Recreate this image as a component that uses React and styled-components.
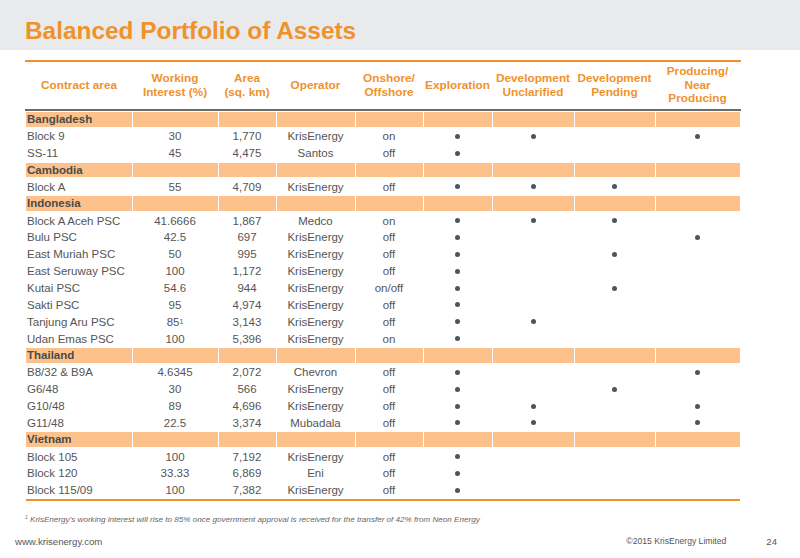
import styled, { createGlobalStyle } from 'styled-components';

const GlobalStyle = createGlobalStyle`
  body {
    margin: 0;
    background: #fff;
    font-family: "Liberation Sans", Arial, sans-serif;
  }
`;

const COLS = '106px 86px 58px 79px 68px 69px 82px 81px 85px';

const Slide = styled.div`
  width: 800px;
  height: 558px;
  overflow: hidden;
  position: relative;
`;

const TitleBar = styled.div`
  height: 50px;
  box-sizing: border-box;
  padding: 17px 0 0 25px;
  background: #e9eaec;
  color: #f0922b;
  font-size: 24.4px;
  font-weight: bold;
  line-height: normal;
`;

const Table = styled.div`
  width: 714px;
  margin: 10px 0 0 26px;
  border-bottom: 2px solid #f0922b;
`;

const HeaderRow = styled.div`
  display: grid;
  grid-template-columns: ${COLS};
  height: 47px;
  border-top: 2px solid #f0922b;
  border-bottom: 2px solid #6a6a6a;
  margin: 0 -1px;
  padding: 0 1px;
`;

const HeadCell = styled.div`
  display: flex;
  align-items: center;
  justify-content: center;
  text-align: center;
  color: #f0922b;
  font-size: 11.8px;
  font-weight: bold;
  line-height: 13.5px;
  white-space: nowrap;
`;

const Row = styled.div`
  display: grid;
  grid-template-columns: ${COLS};
  height: 16.87px;
`;

const BandCell = styled.div`
  background: #fdc28b;
  border-top: 1px solid #fff;
  border-bottom: 1px solid #fff;
  border-left: ${(p) => (p.$first ? '0' : '1.5px solid #fff')};
  color: #4a4a4a;
  font-size: 11.5px;
  font-weight: bold;
  line-height: 14.8px;
  padding-left: 1px;
`;

const Cell = styled.div`
  display: flex;
  align-items: center;
  justify-content: ${(p) => (p.$left ? 'flex-start' : 'center')};
  padding-left: ${(p) => (p.$left ? '1px' : '0')};
  color: #555;
  font-size: 11.5px;
  white-space: nowrap;
`;

const Sup = styled.sup`
  font-size: ${(p) => (p.$small ? '5px' : '7px')};
  line-height: 0;
  vertical-align: ${(p) => (p.$small ? '3px' : '4px')};
`;

const Dot = styled.span`
  display: block;
  width: 5px;
  height: 5px;
  border-radius: 50%;
  background: #4b5561;
`;

const Footnote = styled.div`
  margin: 14px 0 0 25px;
  color: #666;
  font-size: 8.1px;
  font-style: italic;
  line-height: 9px;
`;

const Footer = styled.div`
  display: flex;
  align-items: center;
  margin-top: 12px;
  padding: 0 23px 0 15px;
  color: #555;
  font-size: 9.6px;
  line-height: 11px;
`;

const Copyright = styled.span`
  margin-left: auto;
  margin-right: 40px;
  font-size: 8.6px;
`;

const headers = [
  'Contract area',
  'Working\nInterest (%)',
  'Area\n(sq. km)',
  'Operator',
  'Onshore/\nOffshore',
  'Exploration',
  'Development\nUnclarified',
  'Development\nPending',
  'Producing/\nNear\nProducing',
];

const data = [
  {
    country: 'Bangladesh',
    rows: [
      ['Block 9', '30', '1,770', 'KrisEnergy', 'on', 1, 1, 0, 1],
      ['SS-11', '45', '4,475', 'Santos', 'off', 1, 0, 0, 0],
    ],
  },
  {
    country: 'Cambodia',
    rows: [['Block A', '55', '4,709', 'KrisEnergy', 'off', 1, 1, 1, 0]],
  },
  {
    country: 'Indonesia',
    rows: [
      ['Block A Aceh PSC', '41.6666', '1,867', 'Medco', 'on', 1, 1, 1, 0],
      ['Bulu PSC', '42.5', '697', 'KrisEnergy', 'off', 1, 0, 0, 1],
      ['East Muriah PSC', '50', '995', 'KrisEnergy', 'off', 1, 0, 1, 0],
      ['East Seruway PSC', '100', '1,172', 'KrisEnergy', 'off', 1, 0, 0, 0],
      ['Kutai PSC', '54.6', '944', 'KrisEnergy', 'on/off', 1, 0, 1, 0],
      ['Sakti PSC', '95', '4,974', 'KrisEnergy', 'off', 1, 0, 0, 0],
      ['Tanjung Aru PSC', '85*', '3,143', 'KrisEnergy', 'off', 1, 1, 0, 0],
      ['Udan Emas PSC', '100', '5,396', 'KrisEnergy', 'on', 1, 0, 0, 0],
    ],
  },
  {
    country: 'Thailand',
    rows: [
      ['B8/32 & B9A', '4.6345', '2,072', 'Chevron', 'off', 1, 0, 0, 1],
      ['G6/48', '30', '566', 'KrisEnergy', 'off', 1, 0, 1, 0],
      ['G10/48', '89', '4,696', 'KrisEnergy', 'off', 1, 1, 0, 1],
      ['G11/48', '22.5', '3,374', 'Mubadala', 'off', 1, 1, 0, 1],
    ],
  },
  {
    country: 'Vietnam',
    rows: [
      ['Block 105', '100', '7,192', 'KrisEnergy', 'off', 1, 0, 0, 0],
      ['Block 120', '33.33', '6,869', 'Eni', 'off', 1, 0, 0, 0],
      ['Block 115/09', '100', '7,382', 'KrisEnergy', 'off', 1, 0, 0, 0],
    ],
  },
];

const Interest = ({ value }) =>
  value.endsWith('*') ? (
    <>
      {value.slice(0, -1)}
      <Sup>1</Sup>
    </>
  ) : (
    value
  );

const App = () => {
  return (
    <Slide>
      <GlobalStyle />
      <TitleBar>Balanced Portfolio of Assets</TitleBar>
      <Table>
        <HeaderRow>
          {headers.map((h) => (
            <HeadCell key={h}>
              <div>
                {h.split('\n').map((line) => (
                  <div key={line}>{line}</div>
                ))}
              </div>
            </HeadCell>
          ))}
        </HeaderRow>
        {data.map((group) => (
          <div key={group.country}>
            <Row>
              {headers.map((h, i) => (
                <BandCell key={h} $first={i === 0}>
                  {i === 0 ? group.country : null}
                </BandCell>
              ))}
            </Row>
            {group.rows.map((r) => (
              <Row key={r[0]}>
                <Cell $left>{r[0]}</Cell>
                <Cell>
                  <Interest value={r[1]} />
                </Cell>
                <Cell>{r[2]}</Cell>
                <Cell>{r[3]}</Cell>
                <Cell>{r[4]}</Cell>
                {r.slice(5).map((on, i) => (
                  <Cell key={i}>{on ? <Dot /> : null}</Cell>
                ))}
              </Row>
            ))}
          </div>
        ))}
      </Table>
      <Footnote>
        <Sup $small>1</Sup> KrisEnergy’s working interest will rise to 85% once government approval is
        received for the transfer of 42% from Neon Energy
      </Footnote>
      <Footer>
        <span>www.krisenergy.com</span>
        <Copyright>©2015 KrisEnergy Limited</Copyright>
        <span>24</span>
      </Footer>
    </Slide>
  );
};

export default App;
